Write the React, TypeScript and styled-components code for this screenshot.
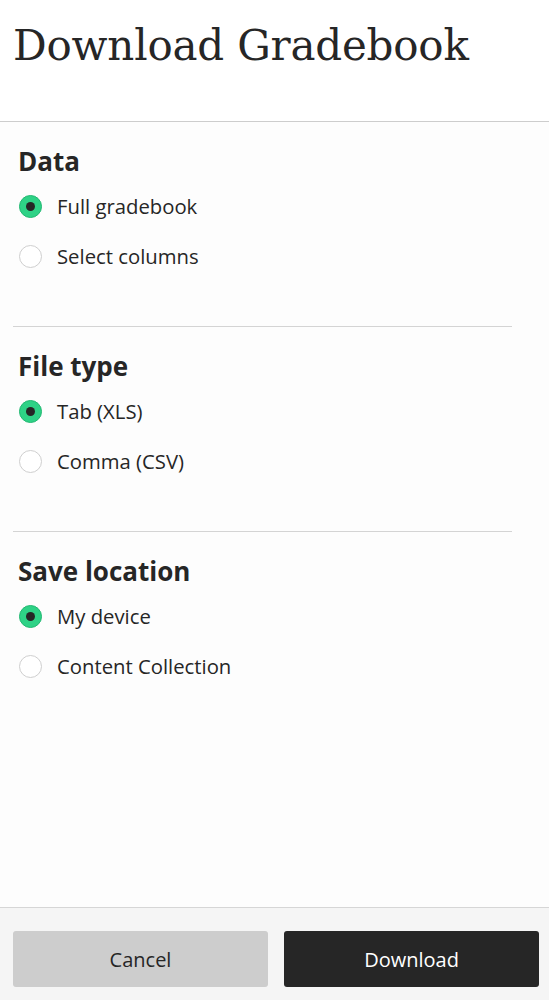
import React, { useState } from "react";
import styled, { createGlobalStyle } from "styled-components";

const Global = createGlobalStyle`
  html, body { margin: 0; padding: 0; }
  body { background: #fdfdfd; font-family: "Open Sans", "Noto Sans", sans-serif; color: #262626; }
  * { box-sizing: border-box; }
`;

const Page = styled.div`
  display: flex;
  flex-direction: column;
  min-height: 1000px;
`;

const Header = styled.header`
  height: 122px;
  padding: 16px 13px 0;
  border-bottom: 1px solid #cdcdcd;
  background: #ffffff;
`;

const Title = styled.h1`
  margin: 0;
  font-family: "DejaVu Serif", "Liberation Serif", serif;
  font-weight: 400;
  font-size: 42px;
  line-height: 60px;
  color: #262626;
  letter-spacing: -0.2px;
`;

const Body = styled.main`
  flex: 1;
  padding: 0 37px 0 13px;
`;

const Section = styled.section<{ $last?: boolean }>`
  height: ${(p) => (p.$last ? "auto" : "205px")};
  border-bottom: ${(p) => (p.$last ? "none" : "1px solid #d4d4d4")};
  padding: 21px 0 0 5px;
`;

const SectionTitle = styled.h2`
  margin: 0 0 11px;
  font-size: 26px;
  font-weight: 700;
  line-height: 36px;
  color: #262626;
`;

const Options = styled.div`
  display: flex;
  flex-direction: column;
  gap: 18px;
`;

const OptionRow = styled.label`
  display: flex;
  align-items: center;
  gap: 15px;
  height: 32px;
  font-size: 20.3px;
  color: #262626;
  cursor: pointer;
`;

const RadioCircle = styled.span<{ $on: boolean }>`
  position: relative;
  flex: none;
  width: 23px;
  height: 23px;
  margin-left: 1px;
  border-radius: 50%;
  border: ${(p) => (p.$on ? "1.5px solid #22b872" : "1.5px solid #cfcfcf")};
  background: ${(p) => (p.$on ? "#2ed286" : "#ffffff")};
  &::after {
    content: "";
    display: ${(p) => (p.$on ? "block" : "none")};
    position: absolute;
    left: 50%;
    top: 50%;
    width: 9px;
    height: 9px;
    margin: -4.5px 0 0 -4.5px;
    border-radius: 50%;
    background: #262626;
  }
`;

const Footer = styled.footer`
  display: grid;
  grid-template-columns: 1fr 1fr;
  gap: 16px;
  padding: 23px 10px 13px 13px;
  background: #f5f5f5;
  border-top: 1px solid #d6d6d6;
`;

const Button = styled.button<{ $primary?: boolean }>`
  height: 56px;
  border: none;
  border-radius: 3px;
  font-family: "Open Sans", sans-serif;
  font-size: 20px;
  background: ${(p) => (p.$primary ? "#262626" : "#cdcdcd")};
  color: ${(p) => (p.$primary ? "#ffffff" : "#262626")};
  cursor: pointer;
`;

type Group = { title: string; options: string[] };

const groups: Group[] = [
  { title: "Data", options: ["Full gradebook", "Select columns"] },
  { title: "File type", options: ["Tab (XLS)", "Comma (CSV)"] },
  { title: "Save location", options: ["My device", "Content Collection"] },
];

export default function App() {
  const [sel, setSel] = useState<number[]>([0, 0, 0]);
  return (
    <Page>
      <Global />
      <Header>
        <Title>Download Gradebook</Title>
      </Header>
      <Body>
        {groups.map((g, gi) => (
          <Section key={g.title} $last={gi === groups.length - 1}>
            <SectionTitle>{g.title}</SectionTitle>
            <Options>
              {g.options.map((o, oi) => (
                <OptionRow
                  key={o}
                  onClick={() => setSel((s) => s.map((v, i) => (i === gi ? oi : v)))}
                >
                  <RadioCircle $on={sel[gi] === oi} />
                  {o}
                </OptionRow>
              ))}
            </Options>
          </Section>
        ))}
      </Body>
      <Footer>
        <Button>Cancel</Button>
        <Button $primary>Download</Button>
      </Footer>
    </Page>
  );
}
